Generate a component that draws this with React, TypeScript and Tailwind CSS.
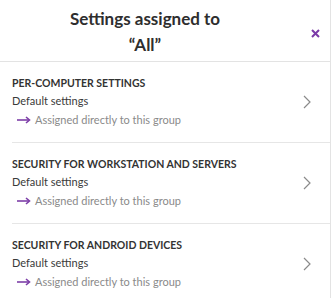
const items = [
  "PER-COMPUTER SETTINGS",
  "SECURITY FOR WORKSTATION AND SERVERS",
  "SECURITY FOR ANDROID DEVICES",
];

const ArrowRight = () => (
  <svg width="14" height="8" viewBox="0 0 14 8" className="shrink-0">
    <path d="M0 4H12" stroke="#7d3fa8" strokeWidth="1.6" />
    <path d="M9 1L12.5 4L9 7" stroke="#7d3fa8" strokeWidth="1.6" fill="none" />
  </svg>
);

const Chevron = () => (
  <svg width="8" height="14" viewBox="0 0 8 14">
    <path d="M1 1L7 7L1 13" stroke="#8a8a8a" strokeWidth="1.2" fill="none" />
  </svg>
);

const App = () => {
  return (
    <div
      className="w-[331px] h-[298px] bg-white border-r border-[#e3e3e3] overflow-hidden"
      style={{ fontFamily: "Lato, 'Open Sans', sans-serif" }}
    >
      {/* Header */}
      <div className="flex h-[62px] border-b border-[#e3e3e3]">
        <div className="ml-[60px] w-[170px] pt-[6px] text-center text-[17px] leading-[26px] font-bold text-[#2e2e2e]">
          Settings assigned to “All”
        </div>
        <button className="ml-auto mr-[6px] mt-[24px] h-[18px] w-[18px] flex items-center justify-center">
          <svg width="9" height="9" viewBox="0 0 9 9">
            <path d="M1 1L8 8M8 1L1 8" stroke="#7b3aa8" strokeWidth="2" />
          </svg>
        </button>
      </div>

      {/* Items */}
      {items.map((title) => (
        <div
          key={title}
          className="ml-[12px] flex items-center border-b border-[#e6e6e6] pt-[12px] pb-[13px] pr-[19px]"
        >
          <div className="flex-1">
            <div className="text-[10.5px] leading-[18px] font-bold text-[#333]">
              {title}
            </div>
            <div className="text-[11px] leading-[18px] text-[#3a3a3a]">
              Default settings
            </div>
            <div className="flex items-center gap-[4px] pl-[5px] text-[11px] leading-[19px] text-[#8a8a8a]">
              <ArrowRight />
              Assigned directly to this group
            </div>
          </div>
          <Chevron />
        </div>
      ))}
    </div>
  );
};

export default App;
